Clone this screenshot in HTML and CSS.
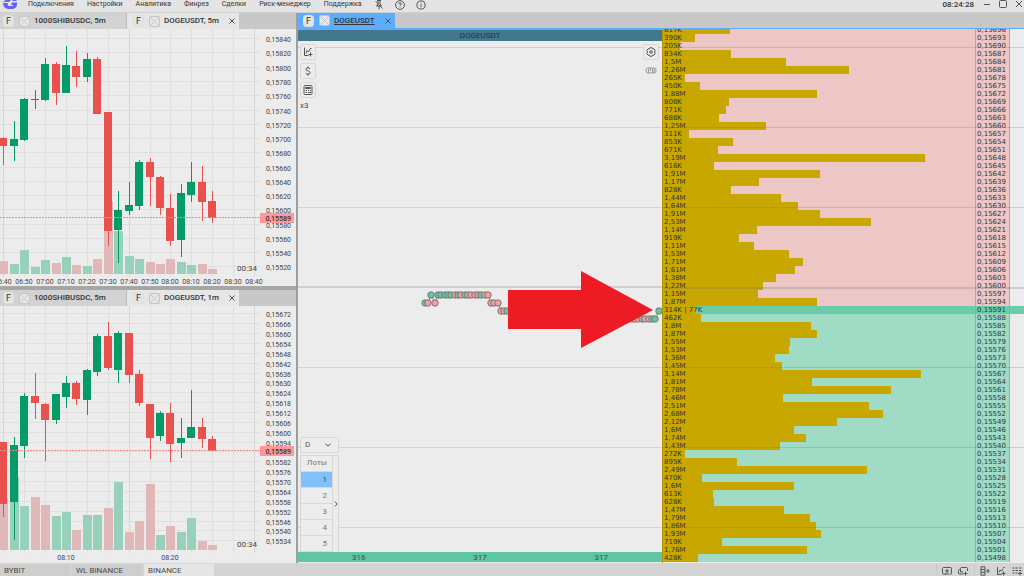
FILE: index.html
```html
<!DOCTYPE html>
<html lang="ru">
<head>
<meta charset="utf-8">
<title>DOGEUSDT</title>
<link rel="stylesheet" href="styles.css">
</head>
<body>
<div class="app">
  <header class="topbar">
    <svg class="logo" width="14" height="10" viewBox="0 0 14 10"><path d="M3 0H8L6 2H0Q1 1 3 0ZM0 3H5Q4 6 6 6H10V5H8L9 2.500H14V5Q13 9 9 9H5Q0 8 0 3ZM10 0H14L13 1H9Z" fill="#6763f2"/></svg>
    <nav class="menu">
      <button>Подключения</button>
      <button>Настройки</button>
      <button>Аналитика</button>
      <button>Финрез</button>
      <button>Сделки</button>
      <button>Риск-менеджер</button>
      <button>Поддержка</button>
    </nav>
    <div class="help">
      <button aria-label="Открепить"><svg width="10" height="10" viewBox="0 0 10 10"><path d="M3 .5H7M4 .5V4L2.500 6H7.500L6 4V.5M5 6V9.500M1.500 1L8.500 8.500"/></svg></button>
      <button aria-label="Справка"><svg width="10" height="10" viewBox="0 0 10 10"><circle cx="5" cy="5" r="4.400"/><path d="M3.700 4Q3.700 2.700 5 2.700T6.300 4Q6.300 4.600 5 5.400V6M5 6.900V7.700"/></svg></button>
      <button aria-label="Информация"><svg width="10" height="10" viewBox="0 0 10 10"><circle cx="5" cy="5" r="4.100"/><path d="M5 4.400V7.300M5 2.600V3.500"/></svg></button>
    </div>
    <time class="clock">08:24:28</time>
    <div class="window-buttons">
      <button aria-label="Свернуть"><svg width="8" height="8" viewBox="0 0 8 8"><path d="M1 4.500H7"/></svg></button>
      <button aria-label="Развернуть"><svg width="8" height="8" viewBox="0 0 8 8"><rect x=".5" y=".5" width="7" height="7" rx="1"/></svg></button>
      <button aria-label="Закрыть"><svg width="8" height="8" viewBox="0 0 8 8"><path d="M1 1L7 7M7 1L1 7"/></svg></button>
    </div>
  </header>

  <main class="main">
    <section class="charts">
      <article class="panel">
        <div class="tabs">
          <div class="tab tab-wide"><span class="badge">F</span><span class="coin"></span><span class="tab-name">1000SHIBUSDC, 5m</span></div>
          <div class="tab tab-active"><span class="badge">F</span><span class="coin"></span><span class="tab-name">DOGEUSDT, 5m</span><button class="tab-close" aria-label="Закрыть"><svg width="6" height="6" viewBox="0 0 6 6"><path d="M.5 .5L5.500 5.500M5.500 .5L.5 5.500"/></svg></button></div>
        </div>
        <svg class="chart" id="chart-5m"></svg>
      </article>
      <article class="panel">
        <div class="tabs">
          <div class="tab tab-wide"><span class="badge">F</span><span class="coin"></span><span class="tab-name">1000SHIBUSDC, 5m</span></div>
          <div class="tab tab-active"><span class="badge">F</span><span class="coin"></span><span class="tab-name">DOGEUSDT, 1m</span><button class="tab-close" aria-label="Закрыть"><svg width="6" height="6" viewBox="0 0 6 6"><path d="M.5 .5L5.500 5.500M5.500 .5L.5 5.500"/></svg></button></div>
        </div>
        <svg class="chart" id="chart-1m"></svg>
      </article>
    </section>

    <section class="trading">
      <div class="tabs tabs-blue">
        <div class="tab tab-blue"><span class="badge">F</span><span class="coin"></span><span class="tab-name">DOGEUSDT</span><button class="tab-close" aria-label="Закрыть"><svg width="6" height="6" viewBox="0 0 6 6"><path d="M.5 .5L5.500 5.500M5.500 .5L.5 5.500"/></svg></button></div>
      </div>
      <div class="workspace">
        <div class="cluster">
          <h1 class="ticker">DOGEUSDT</h1>
          <div class="tape">
            <svg class="ticks" id="ticks"></svg>
            <div class="tools">
              <div class="tool-list">
                <button class="tool" aria-label="Индикаторы"><svg width="10" height="10" viewBox="0 0 10 10"><path d="M1.500 .5V8.500H5.500M3 6.500L4 3.500L5.500 5L7 2M7.500 5.500V9.500M5.500 7.500H9.500M7 1.500H8.500"/></svg></button>
                <button class="tool" aria-label="Валюта"><svg width="10" height="10" viewBox="0 0 10 10"><path d="M7 3Q6.500 1.700 5 1.700Q3 1.700 3 3.200Q3 4.400 5 4.900T7 6.700Q7 8.300 5 8.300Q3.300 8.300 3 6.900M5 .5V2M5 8V9.500"/></svg></button>
                <button class="tool" aria-label="Калькулятор"><svg width="10" height="10" viewBox="0 0 10 10"><rect x="1" y=".5" width="8" height="9" rx="1"/><path d="M2.500 2.500H7.500V3.500H2.500ZM2.500 5.500H4M5 5.500H6M7 5.500H8M2.500 7.500H4M5 7.500H8"/></svg></button>
                <span class="scale">x3</span>
              </div>
              <div class="tool-list">
                <button class="tool" aria-label="Настройки"><svg width="10" height="10" viewBox="0 0 10 10"><path d="M4 .7H6L6.600 1.900L8 1.800L9.200 3.600L8.600 5L9.200 6.400L8 8.200L6.600 8.100L6 9.300H4L3.400 8.100L2 8.200L.8 6.400L1.400 5L.8 3.600L2 1.800L3.400 1.900Z"/><circle cx="5" cy="5" r="1.300"/></svg></button>
                <button class="ruler" aria-label="Линейка"><svg width="12" height="7" viewBox="0 0 12 7"><rect x="1" y="1" width="10" height="5" rx="2"/><path d="M3.500 1V6M5.500 1V4M7.500 2V6M9.200 1V6"/></svg></button>
              </div>
            </div>
            <div class="order-size">
              <div class="mode">
                <select aria-label="Режим"><option>D</option></select>
                <svg width="6" height="4" viewBox="0 0 6 4"><path d="M.5 .8L3 3L5.500 .8"/></svg>
              </div>
              <div class="lots">
                <table>
                  <thead><tr><th>Лоты</th></tr></thead>
                  <tbody>
                    <tr class="lot-selected"><td>1</td></tr>
                    <tr><td>2</td></tr>
                    <tr><td>3</td></tr>
                    <tr><td>4</td></tr>
                    <tr><td>5</td></tr>
                  </tbody>
                </table>
                <button class="expand" aria-label="Раскрыть"><svg width="4" height="6" viewBox="0 0 4 6"><path d="M.8 .5L3 3L.8 5.500"/></svg></button>
              </div>
            </div>
          </div>
          <div class="totals"><span>316</span><span>317</span><span>317</span></div>
        </div>
        <div class="book" id="book"></div>
      </div>
    </section>
  </main>

  <footer class="bottombar">
    <div class="spaces">
      <button class="space">BYBIT</button>
      <button class="space">WL BINANCE</button>
      <button class="space space-active">BINANCE</button>
    </div>
    <div class="actions">
      <button aria-label="Новое окно"><svg width="10" height="10" viewBox="0 0 10 10"><path d="M4 8H1.500Q.5 8 .5 7V2.500Q.5 1.500 1.500 1.500H8.500Q9.500 1.500 9.500 2.500V7Q9.500 8 8.500 8H7.500M5 3V7M3 5H7M3 8H7"/></svg></button>
      <button aria-label="Копия окна"><svg width="10" height="10" viewBox="0 0 10 10"><path d="M2.500 6V2.500Q2.500 1.500 3.500 1.500H8.500Q9.500 1.500 9.500 2.500V5M2.500 3.500H1.500Q.5 3.500 .5 4.500V7Q.5 8 1.500 8H5M2.500 6H5M7.500 5.500V9.500M5.500 7.500H9.500"/></svg></button>
    </div>
    <div class="actions actions-wide">
      <button aria-label="Добавить стакан"><svg width="10" height="10" viewBox="0 0 10 10"><path d="M1 .8H5V9.200H1ZM1 3.500H5M1 6.300H5M8 3V7M6.200 5H9.800"/></svg></button>
      <button aria-label="Добавить график"><svg width="10" height="10" viewBox="0 0 10 10"><path d="M1.500 1V8.500H5.500M3 6.500L4 4L5.500 5L7 2.500M7.500 5.500V9.500M5.500 7.500H9.500M7.500 1.500H9"/></svg></button>
      <button aria-label="Добавить таблицу"><svg width="10" height="10" viewBox="0 0 10 10"><path d="M.5 2H2.500M3.500 2H6M7 2H9.500M.5 4.500H2.500M3.500 4.500H6M7 4.500H9.500M.5 7H2.500M3.500 7H5.500M8 5.500V9.500M6 7.500H10"/></svg></button>
    </div>
  </footer>
</div>
<script src="app.js"></script>
</body>
</html>
```

FILE: styles.css
```css
* { box-sizing: border-box; }

body {
  margin: 0;
  font: 8px/10px Roboto, "Liberation Sans", sans-serif;
  color: #4a4a4a;
  background: #e4e4e4;
}

button {
  margin: 0;
  padding: 0;
  border: 0;
  background: none;
  font: inherit;
  color: inherit;
}

svg { display: block; flex: none; }

button svg, .mode svg {
  fill: none;
  stroke: #555;
  stroke-width: 1;
}

.app {
  display: flex;
  flex-direction: column;
  height: 100vh;
  overflow: hidden;
}

/* top bar */
.topbar {
  display: flex;
  align-items: flex-start;
  height: 13px;
  padding: 0 1px 0 3px;
  border-bottom: 1px solid #d0d0d0;
  background: #e4e4e4;
}
.menu { display: flex; gap: 13px; margin-left: 11px; font-size: 7px; color: #333; }
.menu button { height: 9px; line-height: 9px; }
.help { display: flex; gap: 11px; margin-left: 12px; }
.clock { margin-left: auto; font-weight: 500; line-height: 10px; color: #333; }
.window-buttons { display: flex; gap: 8px; margin-left: 9px; }

/* panels */
.main {
  display: grid;
  grid-template-columns: 298px 1fr;
  flex: 1;
  min-height: 0;
}
.charts {
  display: grid;
  grid-template-rows: 1fr 1fr;
  gap: 4px;
  border-right: 2px solid #9e9e9e;
  background: #a6a6a6;
  min-height: 0;
}
.panel { display: flex; flex-direction: column; min-height: 0; background: #ececec; }
.tabs { display: flex; flex: none; height: 16px; background: #c8c8c8; }
.tab {
  display: flex;
  align-items: center;
  padding: 0 4px 0 3px;
  background: #d2d2d2;
  font-weight: 500;
  color: #333;
}
.tab-wide { width: 127px; border-right: 1px solid #bdbdbd; }
.tab-active { padding-left: 6px; background: #e6e6e6; }
.badge {
  width: 11px;
  height: 12px;
  border: 1px solid #dedede;
  border-radius: 3px;
  background: #e4e4e4;
  font-size: 9px;
  font-weight: 400;
  text-align: center;
  line-height: 10px;
}
.coin {
  width: 11px;
  height: 11px;
  margin: 0 4px 0 5px;
  border: 1px solid #c6c6c6;
  border-radius: 2px;
  background:
    linear-gradient(45deg, transparent 46%, #c6c6c6 46% 54%, transparent 54%),
    linear-gradient(135deg, transparent 46%, #c6c6c6 46% 54%, transparent 54%),
    #e6e6e6;
}
.tab-close { margin-left: 10px; }
.tabs-blue { border-bottom: 1px solid #5cadff; }
.tab-blue { background: #5cadff; padding-left: 5px; }
.tab-blue .tab-name { text-decoration: underline; }

.chart { width: 100%; flex: 1; min-height: 0; font-size: 7px; fill: #444; }
.grid { stroke: #dfdfdf; stroke-width: 1; }
.grid-strong { stroke: #d6d6d6; }
.volume-up { fill: #97d1bc; }
.volume-down { fill: #e1b8b8; }
.candle-up { fill: #049b66; stroke: #049b66; stroke-width: 0; }
.candle-down { fill: #e9514f; stroke: #e9514f; stroke-width: 0; }
.wick { stroke-width: 1; }
.last-line { stroke: #f08a8a; stroke-dasharray: 2 1; }
.last-box { fill: #ff9999; }
.last-text { fill: #333; font-weight: 500; }
.countdown { font-size: 8px; }
.label-y { text-anchor: end; }
.label-x { text-anchor: middle; }

/* trading panel */
.trading { display: flex; flex-direction: column; min-width: 0; min-height: 0; }
.workspace {
  display: grid;
  grid-template-columns: 364fr 362fr;
  flex: 1;
  min-height: 0;
  background: #ececec;
}
.cluster { display: flex; flex-direction: column; min-height: 0; padding-bottom: 1px; }
.ticker {
  margin: 0;
  height: 12px;
  border-top: 1px solid #5cadff;
  background: #41788d;
  font-size: 8px;
  font-weight: 400;
  line-height: 12px;
  text-align: center;
  color: #22343c;
}
.tape {
  display: grid;
  grid-template-rows: 1fr auto;
  flex: 1;
  min-height: 0;
  padding: 3px 3px 0 2px;
  background: linear-gradient(#cfcfcf, #cfcfcf) 0 245px / 100% 2px no-repeat,
    linear-gradient(transparent 79px, #d2d2d2 79px) 0 -73px / 100% 80px;
  position: relative;
}
.ticks { position: absolute; inset: 0; width: 100%; height: 100%; }
.tick-line { fill: none; stroke: #888; }
.tick-up { fill: #66c5a4; stroke: #777; }
.tick-down { fill: #f99c9c; stroke: #777; }
.arrow { fill: #ed1c24; }
.tools { display: flex; justify-content: space-between; z-index: 1; }
.tool-list { display: flex; flex-direction: column; gap: 3px; align-items: flex-start; }
.tool {
  display: grid;
  place-items: center;
  width: 16px;
  height: 16px;
  border: 1px solid #d8d8d8;
  border-radius: 2px;
  background: #ececec;
}
.ruler { margin: 4px 0 0 2px; }
.ruler svg { stroke: #999; }
.order-size { display: grid; gap: 2px; width: 39px; z-index: 1; color: #777; }
.mode {
  display: flex;
  align-items: center;
  height: 16px;
  padding: 0 7px 0 4px;
  border: 1px solid #d8d8d8;
  border-radius: 2px;
  background: #ececec;
}
.mode select {
  flex: 1;
  min-width: 0;
  appearance: none;
  border: 0;
  padding: 0;
  background: none;
  font: inherit;
  color: #555;
}
.lots { display: grid; grid-template-columns: 1fr 6px; border: 1px solid #d8d8d8; border-bottom: 0; background: #ececec; }
.lots table { border-collapse: collapse; width: 100%; }
.lots th, .lots td {
  height: 16px;
  padding: 0 5px 0 0;
  border-bottom: 1px solid #d8d8d8;
  text-align: right;
  font-weight: 400;
}
.lot-selected td { background: #82c0fa; color: #444; }
.expand { display: grid; place-items: center; border-left: 1px solid #d8d8d8; }
.totals {
  display: grid;
  grid-template-columns: repeat(3, 1fr);
  height: 10px;
  line-height: 12px;
  text-align: center;
  background: #5ec6a2;
}

/* order book */
.book {
  overflow: hidden;
  min-height: 0;
  border-left: 1px solid #b39700;
  font-family: "DejaVu Sans", sans-serif;
  font-size: 7px;
  line-height: 9px;
  color: #333;
}
.row {
  display: grid;
  grid-template-columns: 1fr 35px 14px;
  position: relative;
  height: 8px;
}
.row:first-child { margin-top: -3px; }
.ask { --side: #edc6c6; }
.bid { --side: #a0dbc5; }
.size, .price { background: var(--side); white-space: nowrap; height: 8px; }
.price { padding-left: 1px; border: 1px solid #b5a5a5; border-width: 0 1px; }
.bid .price { border-color: #88b5a5; }
.bar { height: 8px; background: #c8a800; padding-left: 1px; }
.best { --side: #6accab; background: #6accab; }
.grid-row::after {
  content: "";
  position: absolute;
  inset: 5px 0 auto;
  height: 1px;
  background: rgba(110, 110, 110, .25);
}
.grid-major::after { height: 2px; }

/* bottom bar */
.bottombar {
  display: flex;
  height: 13px;
  padding: 1px 2px 0 0;
  background: #d4d4d4;
}
.spaces { display: flex; gap: 2px; flex: 1; }
.space { width: 70px; padding: 2px 0 0 4px; background: #cecece; text-align: left; }
.space-active { background: #e6e6e6; }
.actions { display: flex; gap: 6px; padding: 2px 6px 0 5px; border-left: 1px solid #c8c8c8; }
.actions-wide { padding-right: 0; }
```

FILE: app.js
```js
const STEP = 10.44;
const FIRST = 3.4;

// candle: direction, high, open/close top, open/close bottom, low, volume top
const chart5m = {
  id: 'chart-5m', origin: 29, base: 274, last: 218,
  labels: { top: 39.2, step: 14.26, from: 15840, by: 20, count: 17 },
  times: ['06:40', '06:50', '07:00', '07:10', '07:20', '07:30', '07:40', '07:50', '08:00', '08:10', '08:20', '08:30', '08:40'].map((t, i) => [t, i * 2]),
  candles: [
    ['down', 137, 138, 146, 165, 261], ['up', 121, 139, 146, 161, 264],
    ['up', 98, 99, 140, 141, 250], ['up', 90, 99, 100, 109, 267],
    ['up', 58, 64, 100, 101, 260], ['down', 62, 64, 93, 105, 263],
    ['up', 46, 65, 93, 93, 257], ['down', 51, 66, 77, 87, 265],
    ['up', 53, 59, 77, 82, 266], ['down', 57, 59, 114, 114, 259],
    ['down', 112, 112, 231, 246, 201], ['up', 191, 210, 230, 263, 231],
    ['up', 182, 205, 211, 215, 256], ['up', 160, 162, 206, 210, 259],
    ['down', 158, 162, 177, 206, 262], ['down', 176, 177, 208, 215, 264],
    ['down', 194, 208, 241, 246, 259], ['up', 184, 193, 240, 257, 262],
    ['up', 162, 182, 195, 202, 265], ['down', 166, 182, 202, 221, 264],
    ['down', 191, 201, 218, 223, 269]
  ]
};

const chart1m = {
  id: 'chart-1m', origin: 306, base: 550, last: 451,
  labels: { top: 314.3, step: 9.87, from: 15672, by: 6, count: 24 },
  times: [['08:10', 6], ['08:20', 16]],
  candles: [
    ['down', 442, 442, 504, 517, 498], ['up', 437, 445, 502, 540, 477],
    ['up', 393, 396, 446, 458, 506], ['down', 373, 396, 403, 419, 497],
    ['down', 403, 404, 420, 461, 505], ['up', 394, 394, 420, 424, 516],
    ['up', 376, 383, 397, 408, 512], ['down', 381, 383, 399, 405, 530],
    ['up', 369, 370, 400, 415, 515], ['up', 334, 336, 372, 376, 515],
    ['down', 322, 336, 368, 370, 508], ['up', 331, 333, 370, 383, 482],
    ['down', 333, 333, 375, 383, 532], ['down', 370, 374, 403, 406, 521],
    ['down', 404, 404, 438, 459, 484], ['up', 411, 413, 436, 441, 535],
    ['down', 403, 413, 444, 462, 526], ['up', 418, 438, 443, 458, 532],
    ['up', 390, 427, 438, 438, 518], ['down', 418, 427, 439, 448, 541],
    ['down', 436, 439, 451, 451, 545]
  ]
};

function drawChart(c) {
  const y = v => v - c.origin;
  const out = [];
  const { top, step, from, by, count } = c.labels;
  for (let i = 0; i < 13; i++) {
    const x = Math.round(FIRST + i * 2 * STEP) + 0.5;
    out.push(`<line class="grid ${i % 6 === 0 ? 'grid-strong' : ''}" x1="${x}" x2="${x}" y1="0" y2="${y(c.base) + 3}"/>`);
  }
  for (let i = 0; i < count; i++) {
    const ly = Math.round(y(top + i * step));
    const price = from - i * by;
    out.push(`<line class="grid" x1="0" x2="260" y1="${ly - 0.5}" y2="${ly - 0.5}"/>`);
    if (price !== 15588) out.push(`<text class="label-y" x="291" y="${ly + 3}">0,${price}</text>`);
  }
  c.candles.forEach(([dir, , , , , vol], i) => {
    const x = Math.round(FIRST + i * STEP);
    out.push(`<rect class="volume-${dir}" x="${x - 4}" width="9" y="${y(vol)}" height="${c.base - vol}"/>`);
  });
  c.candles.forEach(([dir, high, a, b, low], i) => {
    const x = Math.round(FIRST + i * STEP);
    out.push(`<g class="candle-${dir}"><line class="wick" x1="${x + 0.5}" x2="${x + 0.5}" y1="${y(high)}" y2="${y(low)}"/><rect x="${x - 4}" width="8" y="${y(a)}" height="${b - a}"/></g>`);
  });
  c.times.forEach(([t, i]) => {
    out.push(`<text class="label-x" x="${Math.round(FIRST + i * STEP)}" y="${y(c.base) + 10}">${t}</text>`);
  });
  out.push(`<text class="label-x countdown" x="247" y="${y(c.base) - 3}">00:34</text>`);
  out.push(`<line class="last-line" x1="0" x2="260" y1="${y(c.last) - 0.5}" y2="${y(c.last) - 0.5}"/>`);
  out.push(`<rect class="last-box" x="260" width="34" y="${y(c.last) - 5}" height="10"/>`);
  out.push(`<text class="label-y last-text" x="291" y="${y(c.last) + 3}">0,15589</text>`);
  document.getElementById(c.id).innerHTML = out.join('');
}

drawChart(chart5m);
drawChart(chart1m);

// trade ticks: x, y, direction
const ticks = [
  [127, 262, 'up'], [130, 262, 'down'], [133, 254, 'up'], [137, 262, 'down'],
  [140, 254, 'up'], [143, 254, 'up'], [147, 254, 'up'], [150, 254, 'up'],
  [153, 254, 'up'], [157, 254, 'down'], [160, 254, 'up'], [163, 254, 'down'],
  [167, 254, 'up'], [170, 254, 'down'], [173, 254, 'down'], [177, 254, 'down'],
  [180, 254, 'down'], [183, 254, 'up'], [187, 254, 'down'], [190, 254, 'down'],
  [193, 262, 'down'], [196, 262, 'down'], [200, 262, 'down'],
  [203, 270, 'down'], [206, 270, 'down'], [209, 270, 'up'],
  [330, 278, 'down'], [334, 278, 'up'], [337, 278, 'down'], [340, 278, 'down'],
  [344, 278, 'up'], [347, 278, 'down'], [351, 278, 'down'], [354, 278, 'up'],
  [357, 278, 'up'], [361, 270, 'up']
];
document.getElementById('ticks').innerHTML =
  `<polyline class="tick-line" points="${ticks.map(t => t[0] + ',' + t[1]).join(' ')}"/>` +
  ticks.map(t => `<circle class="tick-${t[2]}" cx="${t[0]}" cy="${t[1]}" r="3.2"/>`).join('') +
  '<polygon class="arrow" points="210,249 283,249 283,230 355,269 283,307 283,288 210,288"/>';

const sizes = ('817K 390K 205K 834K 1,5M 2,26M 265K 450K 1,88M 808K 771K 688K 1,25M 311K 853K 671K 3,19M 616K ' +
  '1,91M 1,17M 828K 1,44M 1,64M 1,91M 2,53M 1,14M 919K 1,11M 1,53M 1,71M 1,61M 1,38M 1,22M 1,15M 1,87M ' +
  '314K|77K 462K 1,8M 1,87M 1,55M 1,53M 1,36M 1,45M 3,14M 1,81M 2,78M 1,46M 2,51M 2,68M 2,12M 1,6M 1,74M ' +
  '1,43M 272K 895K 2,49M 470K 1,6M 613K 628K 1,47M 1,79M 1,86M 1,93M 719K 1,76M 428K').split(' ');
const FULL = 3.8;
const toMillions = s => parseFloat(s.replace(',', '.')) / (s.endsWith('K') ? 1000 : 1);
const best = sizes.indexOf('314K|77K');

document.getElementById('book').innerHTML = sizes.map((s, i) => {
  const price = 15696 - i * 3;
  const width = s.split('|').reduce((sum, v) => sum + toMillions(v), 0) / FULL * 100;
  const cls = ['row', i < best ? 'ask' : 'bid'];
  if (i === best) cls.push('best');
  if (price % 30 === 0) cls.push('grid-row');
  if (price === 15600) cls.push('grid-major');
  return `<div class="${cls.join(' ')}"><div class="size"><div class="bar" style="width:${width.toFixed(1)}%">${s.replace('|', ' | ')}</div></div><div class="price">0,${price}</div></div>`;
}).join('');
```
